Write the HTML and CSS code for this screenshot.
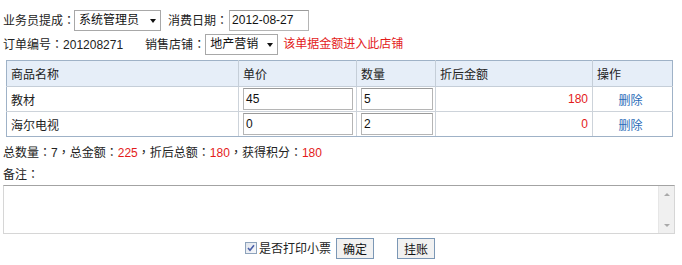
FILE: index.html
```html
<!DOCTYPE html>
<html lang="zh-CN">
<head>
<meta charset="utf-8">
<title>消费单</title>
<link rel="stylesheet" href="styles.css">
</head>
<body>
<div class="page">
  <div class="row row1">
    <span class="label">业务员提成<span class="p" lang="zh-TW">：</span></span>
    <span class="select sel-staff"><span class="sel-text">系统管理员</span><span class="arrow"></span></span>
    <span class="label gap7">消费日期<span class="p" lang="zh-TW">：</span></span>
    <span class="textbox date">2012-08-27</span>
  </div>
  <div class="row row2">
    <span class="label">订单编号<span class="p" lang="zh-TW">：</span>201208271</span>
    <span class="label gap22">销售店铺<span class="p" lang="zh-TW">：</span></span>
    <span class="select sel-shop"><span class="sel-text">地产营销</span><span class="arrow"></span></span>
    <span class="red note">该单据金额进入此店铺</span>
  </div>

  <table class="grid">
    <colgroup>
      <col class="c1"><col class="c2"><col class="c3"><col class="c4"><col class="c5">
    </colgroup>
    <thead>
      <tr><th>商品名称</th><th>单价</th><th>数量</th><th>折后金额</th><th>操作</th></tr>
    </thead>
    <tbody>
      <tr>
        <td>教材</td>
        <td><span class="textbox cell price">45</span></td>
        <td><span class="textbox cell qty">5</span></td>
        <td class="num red">180</td>
        <td class="op"><a class="link">删除</a></td>
      </tr>
      <tr>
        <td>海尔电视</td>
        <td><span class="textbox cell price">0</span></td>
        <td><span class="textbox cell qty">2</span></td>
        <td class="num red">0</td>
        <td class="op"><a class="link">删除</a></td>
      </tr>
    </tbody>
  </table>

  <div class="summary">总数量<span class="p" lang="zh-TW">：</span>7<span class="p" lang="zh-TW">，</span>总金额<span class="p" lang="zh-TW">：</span><span class="red">225</span><span class="p" lang="zh-TW">，</span>折后总额<span class="p" lang="zh-TW">：</span><span class="red">180</span><span class="p" lang="zh-TW">，</span>获得积分<span class="p" lang="zh-TW">：</span><span class="red">180</span></div>
  <div class="memo-label">备注<span class="p" lang="zh-TW">：</span></div>
  <div class="memo">
    <div class="memo-area"></div>
    <div class="scrollbar">
      <span class="sb-up"></span>
      <span class="sb-down"></span>
    </div>
  </div>

  <div class="actions">
    <span class="checkbox">
      <svg width="12" height="12" viewBox="0 0 12 12"><defs><linearGradient id="cb" x1="0" y1="0" x2="1" y2="1"><stop offset="0" stop-color="#dfe4ec"/><stop offset="1" stop-color="#f8f9fb"/></linearGradient></defs><rect x="0.5" y="0.5" width="11" height="11" fill="url(#cb)" stroke="#8ea3bb"/><path d="M3 6 L5 8.3 L9 3.2" fill="none" stroke="#4a5fa8" stroke-width="1.6"/></svg>
    </span>
    <span class="check-text">是否打印小票</span>
    <span class="btn">确定</span>
    <span class="btn btn2">挂账</span>
  </div>
</div>
</body>
</html>
```
FILE: styles.css
```css
html, body {
  margin: 0;
  padding: 0;
  background: #ffffff;
}
body {
  font-family: "Liberation Sans", "Noto Sans CJK SC", sans-serif;
  font-size: 12px;
  color: #222222;
}
.p {
  font-family: "Noto Sans CJK TC", sans-serif;
}
.page {
  padding: 10px 0 0 3px;
  width: 676px;
}
.row {
  display: flex;
  align-items: center;
  height: 21px;
  line-height: 21px;
  white-space: nowrap;
}
.row2 {
  margin-top: 3px;
}
.gap7 { margin-left: 7px; }
.gap22 { margin-left: 22px; }
.red { color: #e31b1b; }
.note { margin-left: 5px; }

.select {
  box-sizing: border-box;
  height: 21px;
  border: 1px solid #a8a8a8;
  background: #fff;
  display: inline-flex;
  align-items: center;
  justify-content: space-between;
  padding: 0 4px 0 4px;
  font-size: 12px;
  color: #111;
}
.sel-staff { width: 87px; margin-left: -1px; }
.sel-shop { width: 73px; }
.arrow {
  width: 0;
  height: 0;
  border-left: 3.5px solid transparent;
  border-right: 3.5px solid transparent;
  border-top: 4px solid #111;
  margin-top: 1px;
}

.textbox {
  box-sizing: border-box;
  display: inline-block;
  height: 21px;
  line-height: 19px;
  border: 1px solid #b5b5b5;
  border-top-color: #9a9a9a;
  background: #fff;
  padding-left: 2px;
  color: #111;
  font-family: "Liberation Sans", sans-serif;
  font-size: 12px;
}
.date { width: 80px; margin-left: 1px; }

.grid {
  margin: 5px 0 0 3px;
  width: 666px;
  border-collapse: collapse;
  table-layout: fixed;
  border: 1px solid #9fb2c7;
}
.c1 { width: 232px; }
.c2 { width: 118px; }
.c3 { width: 79px; }
.c4 { width: 157px; }
.c5 { width: 80px; }
.grid th {
  background: #e6eef8;
  height: 25px;
  padding: 0 4px;
  text-align: left;
  font-weight: normal;
  color: #222;
  border: 1px solid #c5ced8;
  border-top-color: #9fb2c7;
  vertical-align: middle;
}
.grid td {
  height: 24px;
  padding: 0 3px 0 4px;
  border: 1px solid #cdd3da;
  vertical-align: middle;
}
.grid tr:last-child td { border-bottom-color: #9fb2c7; }
.grid th:first-child, .grid td:first-child { border-left-color: #9fb2c7; }
.grid th:last-child, .grid td:last-child { border-right-color: #9fb2c7; }
.textbox.cell {
  height: 22px;
  line-height: 20px;
  display: block;
}
.price { width: 110px; }
.qty { width: 72px; }
.grid td.num {
  text-align: right;
  padding-right: 4px;
}
.grid td.op {
  text-align: center;
  padding-right: 8px;
}
.link {
  color: #2c6cb8;
  text-decoration: none;
}

.summary {
  margin-top: 7px;
  height: 16px;
  line-height: 16px;
}
.memo-label {
  margin-top: 6px;
  height: 16px;
  line-height: 16px;
}
.memo {
  margin-top: 3px;
  box-sizing: border-box;
  width: 672px;
  height: 49px;
  display: flex;
  border: 1px solid #d6d6d6;
  border-top-color: #a3a3a3;
  background: #fff;
}
.memo-area {
  flex: 1;
}
.scrollbar {
  width: 16px;
  background: #f0f0f0;
  border-left: 1px solid #e6e6e6;
  display: flex;
  flex-direction: column;
  justify-content: space-between;
  align-items: center;
  padding: 7px 0 6px;
  box-sizing: border-box;
}
.sb-up, .sb-down {
  width: 0;
  height: 0;
  border-left: 3px solid transparent;
  border-right: 3px solid transparent;
}
.sb-up { border-bottom: 3px solid #a9a9a9; }
.sb-down { border-top: 3px solid #a9a9a9; }

.actions {
  margin-top: 4px;
  display: flex;
  justify-content: center;
  align-items: center;
  height: 21px;
  padding-right: 2px;
}
.checkbox {
  display: inline-flex;
  width: 12px;
  height: 12px;
  margin-top: -2px;
}
.check-text {
  margin-left: 2px;
  margin-right: 5px;
  line-height: 16px;
}
.btn {
  box-sizing: border-box;
  display: inline-flex;
  align-items: center;
  justify-content: center;
  width: 38px;
  height: 21px;
  border: 1px solid #7b97b5;
  background: #f1f1f1;
  color: #111;
}
.btn2 { margin-left: 23px; }
```
